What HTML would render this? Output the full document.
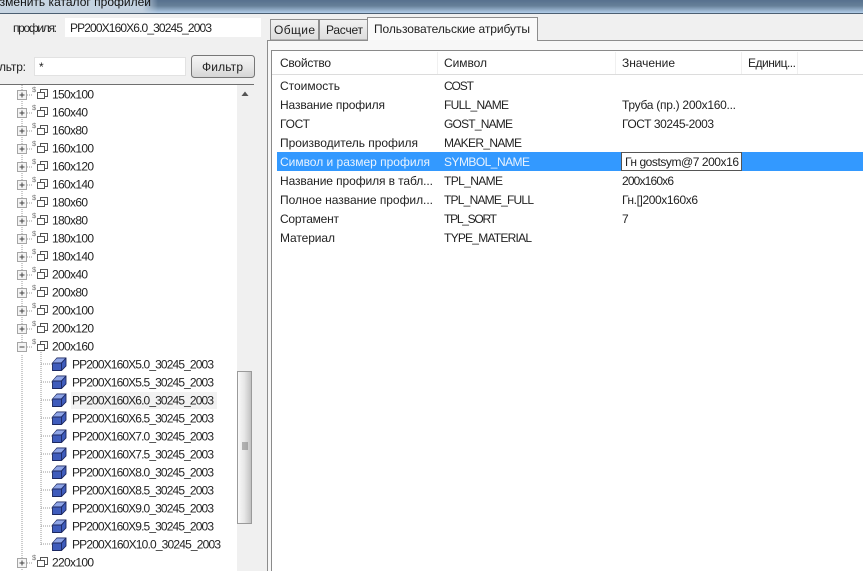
<!DOCTYPE html>
<html><head><meta charset="utf-8"><style>
html,body{margin:0;padding:0;background:#f0f0f0;overflow:hidden}
svg{display:block;filter:blur(.25px)}
text{font-family:"Liberation Sans",sans-serif;font-size:12px;fill:#222}
</style></head><body>
<svg width="863" height="571" viewBox="0 0 863 571" xmlns="http://www.w3.org/2000/svg">
<defs>
<linearGradient id="tb" x1="0" y1="0" x2="0" y2="1"><stop offset="0" stop-color="#56708e"/><stop offset=".45" stop-color="#668099"/><stop offset="1" stop-color="#b2cde9"/></linearGradient>
<linearGradient id="tl" x1="0" y1="0" x2="1" y2="0"><stop offset="0" stop-color="#c9d6e3"/><stop offset=".9" stop-color="#c2d1e0"/><stop offset="1" stop-color="#c2d1e0" stop-opacity="0"/></linearGradient>
<linearGradient id="btn" x1="0" y1="0" x2="0" y2="1"><stop offset="0" stop-color="#f4f4f4"/><stop offset=".5" stop-color="#e8e8e8"/><stop offset="1" stop-color="#d4d4d4"/></linearGradient>
<linearGradient id="thumb" x1="0" y1="0" x2="1" y2="0"><stop offset="0" stop-color="#fafafa"/><stop offset=".5" stop-color="#e6e6e6"/><stop offset="1" stop-color="#bfbfbf"/></linearGradient>
<linearGradient id="tab" x1="0" y1="0" x2="0" y2="1"><stop offset="0" stop-color="#f2f2f2"/><stop offset="1" stop-color="#dcdcdc"/></linearGradient>
<g id="node">
<path d="M27 1H32" stroke="#999" stroke-dasharray="1 1" fill="none"/>
<rect x="17.5" y="-3.500" width="9" height="9" fill="#f4f4f4" stroke="#a5a5a5"/>
<path d="M19.5 1H24.5" stroke="#444"/>
<text x="32" y="-2" style="font-size:7.500px;fill:#777">$</text>
<rect x="40.5" y="-4.500" width="7" height="7" fill="#fff" stroke="#555"/>
<rect x="37.5" y="-1.500" width="7" height="6" fill="#fff" stroke="#555"/>
</g>
<g id="plus"><use href="#node"/><path d="M22 -1.500V3.500" stroke="#444"/></g>
<g id="leaf">
<path d="M41 0H52" stroke="#999" stroke-dasharray="1 1" fill="none"/>
<path d="M52.5 -1L57 -6H66V2L61.500 6.500H52.500Z" fill="#3f5cbc" stroke="#1c2860" stroke-width=".9"/>
<path d="M52.5 -1H61.500L66 -6M61.500 -1V6.500" fill="none" stroke="#1c2860" stroke-width=".9"/>
<path d="M53 -1.500L57 -5.600H65L61 -1.500Z" fill="#8fa5e6"/>
</g>
</defs>

<rect width="863" height="571" fill="#f0f0f0"/>
<rect width="863" height="13" fill="url(#tb)"/>
<rect width="158" height="13" fill="url(#tl)"/>
<text x="-9" y="6" textLength="160" lengthAdjust="spacing" style="font-size:12px;fill:#111">Изменить каталог профилей</text>
<rect y="13" width="863" height="1" fill="#4c5f72"/>

<!-- top inputs -->
<text x="13" y="32" textLength="44">профиля:</text>
<rect x="65" y="18" width="196" height="19" fill="#fff"/>
<text x="70" y="32" textLength="142">PP200X160X6.0_30245_2003</text>

<text x="-1" y="71" textLength="27">льтр:</text>
<rect x="34.5" y="57.500" width="151" height="18" fill="#fff" stroke="#e2e2e2"/>
<text x="39" y="71">*</text>
<rect x="191.5" y="55.500" width="63" height="22" rx="3" fill="url(#btn)" stroke="#777"/>
<text x="202" y="71" textLength="41">Фильтр</text>

<!-- tree -->
<rect x="0" y="85" width="237" height="486" fill="#fff"/>
<rect x="0" y="84" width="254" height="1" fill="#6f6f6f"/>
<path d="M22 85V347M22 355V571M41 352V545" stroke="#999" stroke-dasharray="1 1" fill="none"/>
<rect x="237" y="85" width="16" height="486" fill="#f0f0f0"/>
<path d="M241.500 96L245 91.500L248.500 96Z" fill="#555"/>
<rect x="237.500" y="371.500" width="14" height="152" fill="url(#thumb)" stroke="#9a9a9a"/>
<path d="M242 443H248M242 445H248M242 447H248M242 449H248" stroke="#777"/>

<use href="#plus" y="94"/><text x="52" y="98.500" textLength="42">150x100</text>
<use href="#plus" y="112"/><text x="52" y="116.500" textLength="36">160x40</text>
<use href="#plus" y="130"/><text x="52" y="134.500" textLength="36">160x80</text>
<use href="#plus" y="148"/><text x="52" y="152.500" textLength="42">160x100</text>
<use href="#plus" y="166"/><text x="52" y="170.500" textLength="42">160x120</text>
<use href="#plus" y="184"/><text x="52" y="188.500" textLength="42">160x140</text>
<use href="#plus" y="202"/><text x="52" y="206.500" textLength="36">180x60</text>
<use href="#plus" y="220"/><text x="52" y="224.500" textLength="36">180x80</text>
<use href="#plus" y="238"/><text x="52" y="242.500" textLength="42">180x100</text>
<use href="#plus" y="256"/><text x="52" y="260.500" textLength="42">180x140</text>
<use href="#plus" y="274"/><text x="52" y="278.500" textLength="36">200x40</text>
<use href="#plus" y="292"/><text x="52" y="296.500" textLength="36">200x80</text>
<use href="#plus" y="310"/><text x="52" y="314.500" textLength="42">200x100</text>
<use href="#plus" y="328"/><text x="52" y="332.500" textLength="42">200x120</text>
<use href="#node" y="346"/><text x="52" y="350.500" textLength="42">200x160</text>

<rect x="71" y="392" width="146" height="17" fill="#f2f2f2"/>
<use href="#leaf" y="364"/><text x="72" y="368.500" textLength="142">PP200X160X5.0_30245_2003</text>
<use href="#leaf" y="382"/><text x="72" y="386.500" textLength="142">PP200X160X5.5_30245_2003</text>
<use href="#leaf" y="400"/><text x="72" y="404.500" textLength="142">PP200X160X6.0_30245_2003</text>
<use href="#leaf" y="418"/><text x="72" y="422.500" textLength="142">PP200X160X6.5_30245_2003</text>
<use href="#leaf" y="436"/><text x="72" y="440.500" textLength="142">PP200X160X7.0_30245_2003</text>
<use href="#leaf" y="454"/><text x="72" y="458.500" textLength="142">PP200X160X7.5_30245_2003</text>
<use href="#leaf" y="472"/><text x="72" y="476.500" textLength="142">PP200X160X8.0_30245_2003</text>
<use href="#leaf" y="490"/><text x="72" y="494.500" textLength="142">PP200X160X8.5_30245_2003</text>
<use href="#leaf" y="508"/><text x="72" y="512.500" textLength="142">PP200X160X9.0_30245_2003</text>
<use href="#leaf" y="526"/><text x="72" y="530.500" textLength="142">PP200X160X9.5_30245_2003</text>
<use href="#leaf" y="544"/><text x="72" y="548.500" textLength="149">PP200X160X10.0_30245_2003</text>
<use href="#plus" y="562"/><text x="52" y="566.500" textLength="42">220x100</text>

<!-- panel -->
<rect x="267" y="40" width="596" height="531" fill="#f7f7f7"/>
<path d="M267.500 571V40.500H863" fill="none" stroke="#8d8d8d"/>
<rect x="271" y="50" width="592" height="521" fill="#fff"/>
<path d="M271.500 571V50.500H863" fill="none" stroke="#8a8a8a"/>

<!-- tabs -->
<path d="M270.500 40V19.500H318.500V40Z" fill="url(#tab)" stroke="#8d8d8d"/>
<path d="M319.500 40V19.500H367.500V40Z" fill="url(#tab)" stroke="#8d8d8d"/>
<path d="M367.500 41V17.500H537.500V40" fill="#fafafa" stroke="#8d8d8d"/>
<rect x="368" y="40" width="169" height="2" fill="#f7f7f7"/>
<text x="274" y="34" textLength="41">Общие</text>
<text x="326" y="34" textLength="37">Расчет</text>
<text x="374" y="33" textLength="156">Пользовательские атрибуты</text>

<!-- header -->
<rect x="272" y="51" width="591" height="23" fill="#fff"/>
<rect x="272" y="74" width="591" height="1" fill="#dcdcdc"/>
<path d="M437.500 52V74M615.500 52V74M741.500 52V74M797.500 52V74" stroke="#f0f0f0"/>
<text x="280" y="67" textLength="51">Свойство</text>
<text x="444" y="67" textLength="43">Символ</text>
<text x="622" y="67" textLength="53">Значение</text>
<text x="748" y="67" textLength="48">Единиц...</text>

<rect x="277" y="152" width="586" height="19" fill="#3399ff"/>

<text x="280" y="90" textLength="60">Стоимость</text>
<text x="444" y="90" textLength="30">COST</text>
<text x="280" y="109" textLength="105">Название профиля</text>
<text x="444" y="109" textLength="65">FULL_NAME</text>
<text x="622" y="109" textLength="114">Труба (пр.) 200x160...</text>
<text x="280" y="128" textLength="30">ГОСТ</text>
<text x="444" y="128" textLength="69">GOST_NAME</text>
<text x="622" y="128" textLength="92">ГОСТ 30245-2003</text>
<text x="280" y="147" textLength="138">Производитель профиля</text>
<text x="444" y="147" textLength="78">MAKER_NAME</text>
<text x="280" y="166" textLength="150" style="fill:#e8f3ff">Символ и размер профиля</text>
<text x="444" y="166" textLength="86" style="fill:#e8f3ff">SYMBOL_NAME</text>
<rect x="621.500" y="152.500" width="120" height="18" fill="#fff" stroke="#555"/>
<text x="625" y="166" textLength="114">Гн gostsym@7 200x16</text>
<text x="280" y="185" textLength="153">Название профиля в табл...</text>
<text x="444" y="185" textLength="59">TPL_NAME</text>
<text x="622" y="185" textLength="52">200x160x6</text>
<text x="280" y="204" textLength="153">Полное название профил...</text>
<text x="444" y="204" textLength="90">TPL_NAME_FULL</text>
<text x="622" y="204" textLength="76">Гн.[]200x160x6</text>
<text x="280" y="223" textLength="59">Сортамент</text>
<text x="444" y="223" textLength="53">TPL_SORT</text>
<text x="622" y="223">7</text>
<text x="280" y="242" textLength="55">Материал</text>
<text x="444" y="242" textLength="88">TYPE_MATERIAL</text>
</svg>
</body></html>
